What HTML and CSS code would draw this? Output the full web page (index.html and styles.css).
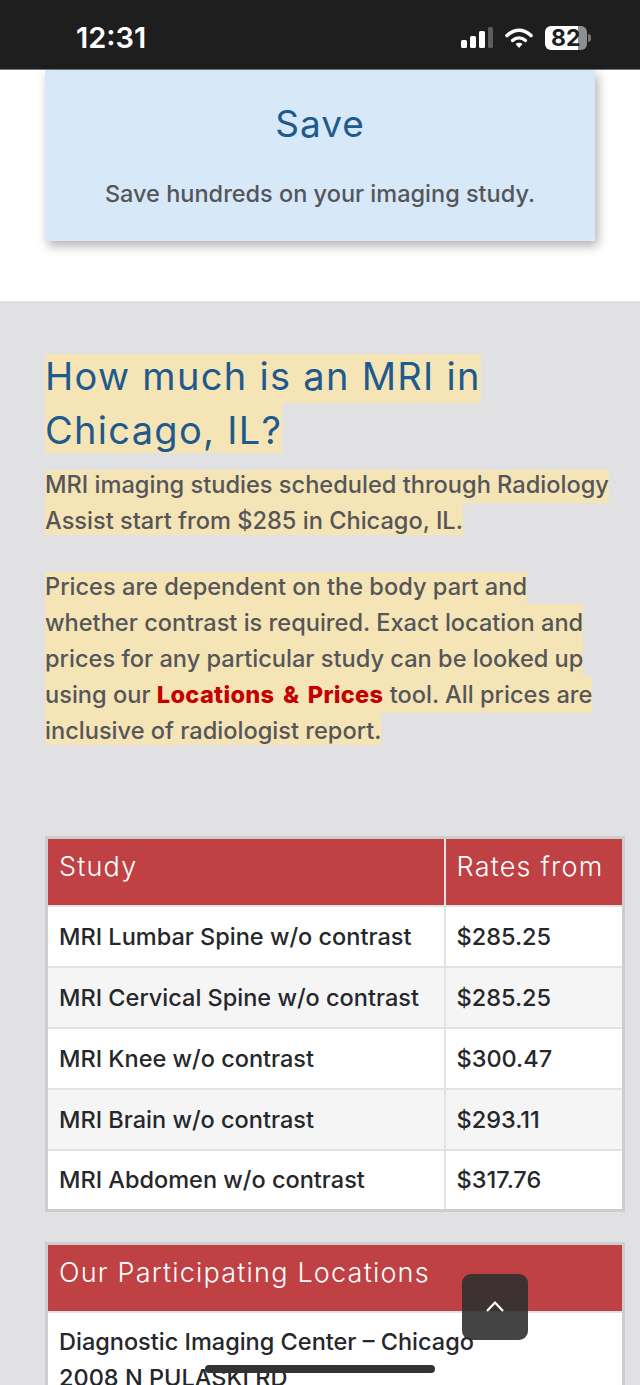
FILE: index.html
```html
<!DOCTYPE html>
<html lang="en">
<head>
    <meta charset="UTF-8">
    <meta name="viewport" content="width=device-width, initial-scale=1.0">
    <title>How much is an MRI in Chicago, IL?</title>
    <link rel="stylesheet" href="styles.css">
</head>
<body>
    <header class="status-bar">
        <span class="clock">12:31</span>
        <div class="status-icons">
            <svg class="signal" width="32" height="21" viewBox="0 0 32 21">
                <rect x="0" y="13" width="6" height="8" rx="1.500" fill="#fff"/>
                <rect x="9" y="9" width="6" height="12" rx="1.500" fill="#fff"/>
                <rect x="18" y="4" width="6" height="17" rx="1.500" fill="#fff"/>
                <rect x="27" y="0" width="5" height="21" rx="1.500" fill="#5c5c5c"/>
            </svg>
            <svg class="wifi" width="28" height="20" viewBox="0 0 28 20">
                <path d="M2 7.500C9.500 0.500 18.500 0.500 26 7.500" fill="none" stroke="#fff" stroke-width="3.600" stroke-linecap="round"/>
                <path d="M7.500 12.500C11.500 9 16.500 9 20.500 12.500" fill="none" stroke="#fff" stroke-width="3.400" stroke-linecap="round"/>
                <path d="M10.500 16C12.500 14.200 15.500 14.200 17.500 16L14 20Z" fill="#fff"/>
            </svg>
            <div class="battery">
                <div class="battery-body"><span class="battery-level">82</span></div>
                <div class="battery-cap"></div>
            </div>
        </div>
    </header>

    <section class="save-section">
        <div class="save-card">
            <h3>Save</h3>
            <p>Save hundreds on your imaging study.</p>
        </div>
    </section>

    <section class="price-section">
        <h2><mark>How much is an MRI in Chicago, IL?</mark></h2>
        <p class="copy"><mark>MRI imaging studies scheduled through Radiology Assist start from $285 in Chicago, IL.</mark></p>
        <p class="copy"><mark>Prices are dependent on the body part and whether contrast is required. Exact location and prices for any particular study can be looked up using our <a href="#">Locations &amp; Prices</a> tool. All prices are inclusive of radiologist report.</mark></p>

        <table class="rates">
            <thead>
                <tr><th>Study</th><th class="rate-col">Rates from</th></tr>
            </thead>
            <tbody>
                <tr><td>MRI Lumbar Spine w/o contrast</td><td>$285.25</td></tr>
                <tr><td>MRI Cervical Spine w/o contrast</td><td>$285.25</td></tr>
                <tr><td>MRI Knee w/o contrast</td><td>$300.47</td></tr>
                <tr><td>MRI Brain w/o contrast</td><td>$293.11</td></tr>
                <tr><td>MRI Abdomen w/o contrast</td><td>$317.76</td></tr>
            </tbody>
        </table>

        <table class="rates locations">
            <thead>
                <tr><th>Our Participating Locations</th></tr>
            </thead>
            <tbody>
                <tr><td>Diagnostic Imaging Center – Chicago<br>2008 N PULASKI RD</td></tr>
            </tbody>
        </table>
    </section>

    <button class="to-top" aria-label="Back to top">
        <svg width="20" height="14" viewBox="0 0 20 14"><path d="M2 12L10 3.500L18 12" fill="none" stroke="#fff" stroke-width="2.200"/></svg>
    </button>
    <div class="home-bar"></div>
</body>
</html>
```

FILE: styles.css
```css
body {
    position: relative;
    height: 1385px;
    margin: 0;
    overflow: hidden;
    background-color: #fff;
    font-family: 'Inter', 'Roboto', sans-serif;
    color: #55565a;
}

.status-bar {
    display: flex;
    align-items: center;
    justify-content: space-between;
    height: 70px;
    padding: 6px 49px 0 76px;
    box-sizing: border-box;
    background-color: #1e1e1e;
    border-bottom: 1px solid #77787a;
}

.clock {
    color: #fff;
    font-size: 29px;
    font-weight: 600;
}

.status-icons {
    display: flex;
    align-items: center;
    gap: 12px;
}

.battery {
    display: flex;
    align-items: center;
}

.battery-body {
    width: 42px;
    height: 24px;
    padding-left: 6px;
    box-sizing: border-box;
    border-radius: 6px;
    background: linear-gradient(to right, #fff 33px, #8f8f8f 33px);
}

.battery-level {
    display: block;
    color: #1e1e1e;
    font-size: 23px;
    font-weight: 700;
    line-height: 24px;
}

.battery-cap {
    width: 3px;
    height: 8px;
    margin-left: 1px;
    border-radius: 0 3px 3px 0;
    background-color: #77787a;
}

.save-section {
    height: 231px;
    padding: 0 45px;
}

.save-card {
    height: 171px;
    padding-top: 30px;
    box-sizing: border-box;
    background-color: #d7e8f8;
    box-shadow: 3px 5px 10px rgba(0, 0, 0, 0.3);
    text-align: center;
}

.save-card h3 {
    margin: 0;
    color: #1f5a8c;
    font-size: 37px;
    font-weight: 400;
    letter-spacing: 1px;
    line-height: 48px;
}

.save-card p {
    margin: 32px 0 0;
    font-size: 23.500px;
    font-weight: 500;
    line-height: 28px;
}

.price-section {
    height: 1084px;
    padding: 48px 15px 0 45px;
    background-color: #e1e1e4;
}

.price-section h2 {
    margin: 0 30px 10px 0;
    color: #1f5a8c;
    font-size: 38px;
    font-weight: 400;
    letter-spacing: 1.300px;
    line-height: 54px;
    clip-path: inset(5px 0 4px 0);
}

.price-section h2 mark {
    padding: 4px 0;
}

mark {
    background-color: #f5e4b6;
    color: inherit;
}

.copy {
    margin: 0 0 30px;
    font-size: 23.600px;
    font-weight: 500;
    line-height: 36px;
    clip-path: inset(3px 0 4px 0);
}

/* fills the gaps between lines so the highlight reads as one block */
.copy mark {
    padding: 3.720px 0;
}

.copy a {
    color: #c40000;
    font-weight: 800;
    letter-spacing: 0.300px;
    word-spacing: 3px;
    text-decoration: none;
}

.rates {
    width: 580px;
    margin-top: 87px;
    border-collapse: collapse;
    border: 3px solid #cdcdd0;
    background-color: #fff;
    color: #25272b;
    table-layout: fixed;
}

.rates th {
    height: 68px;
    padding: 0 11px 10px;
    box-sizing: border-box;
    border: 2px solid #e2e2e6;
    background-color: #bf4144;
    color: #fff;
    font-size: 27px;
    font-weight: 300;
    letter-spacing: 1.200px;
    text-align: left;
}

.rate-col {
    width: 179px;
}

.rates td {
    height: 61px;
    padding: 0 11px;
    box-sizing: border-box;
    border: 2px solid #e2e2e6;
    font-size: 23.500px;
    font-weight: 500;
}

.rates tbody tr:nth-child(even) {
    background-color: #f5f5f6;
}

.locations {
    margin-top: 30px;
}

.locations td {
    padding-top: 11px;
    line-height: 36px;
}

.to-top {
    position: absolute;
    left: 462px;
    top: 1274px;
    width: 66px;
    height: 66px;
    padding: 0;
    border: none;
    border-radius: 9px;
    background-color: rgba(48, 48, 48, 0.9);
    cursor: pointer;
}

.home-bar {
    position: absolute;
    left: 205px;
    top: 1365px;
    width: 230px;
    height: 8px;
    border-radius: 4px;
    background-color: #333;
}
```
